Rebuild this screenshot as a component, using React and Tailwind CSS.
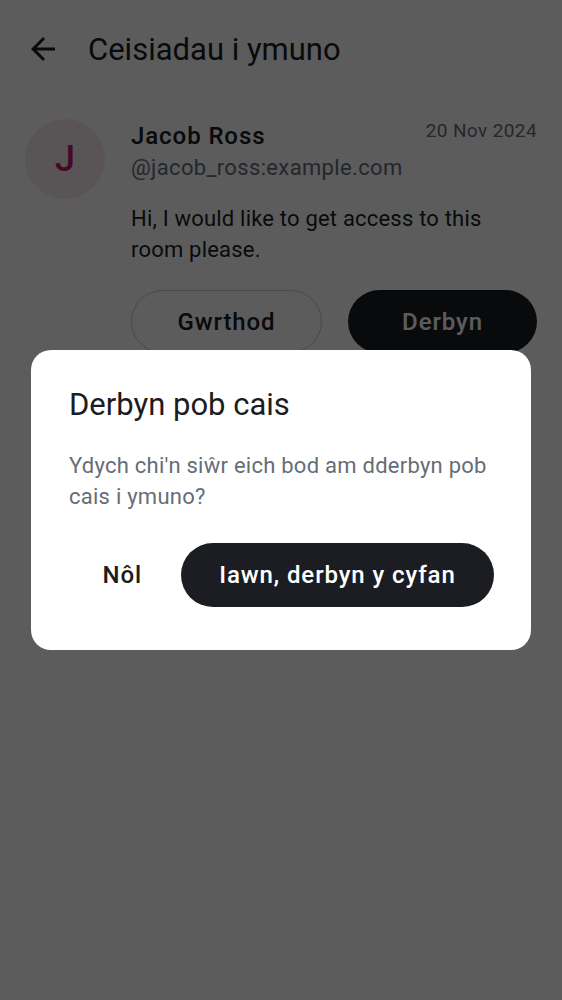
import React from "react";

const font = { fontFamily: "Roboto, 'Noto Sans', sans-serif" };
const medium = "font-['Roboto_Medium',Roboto,sans-serif] font-normal";

const BackArrow = () => (
  <svg width="36" height="36" viewBox="0 0 24 24" fill="#1b1d22">
    <path d="M20 11H7.83l5.59-5.59L12 4l-8 8 8 8 1.41-1.41L7.83 13H20v-2z" />
  </svg>
);

const JoinRequest = () => {
  return (
    <div className="flex pl-[25px] pr-[25px] pt-[21px]">
      <div className="w-[80px] h-[80px] shrink-0 rounded-full bg-[#f7e9ec] flex items-center justify-center">
        <span className={`text-[36px] ${medium} text-[#c01a6e] leading-none`}>J</span>
      </div>
      <div className="flex-1 ml-[26px]">
        <div className="flex items-start justify-between">
          <div className={`text-[24px] leading-[32px] ${medium} tracking-[0.9px] text-[#1b1d22] mt-[1px]`}>Jacob Ross</div>
          <div className="text-[19px] leading-[24px] text-[#656d77] tracking-[0.4px]">20 Nov 2024</div>
        </div>
        <div className="text-[22px] leading-[28px] text-[#656d77] tracking-[0.35px] mt-[2px]">@jacob_ross:example.com</div>
        <p className="text-[22px] leading-[31px] text-[#1b1d22] mt-[21px] tracking-[0.2px]">
          Hi, I would like to get access to this room please.
        </p>
        <div className="flex gap-[26px] mt-[25px]">
          <button className={`flex-1 h-[63px] rounded-full border border-[#c5c9cf] text-[24px] ${medium} tracking-[0.9px] text-[#1b1d22]`}>
            Gwrthod
          </button>
          <button className={`flex-1 h-[63px] rounded-full bg-[#1b1d22] text-[24px] ${medium} tracking-[0.9px] text-white`}>
            Derbyn
          </button>
        </div>
      </div>
    </div>
  );
};

export default function App() {
  return (
    <div className="min-h-screen bg-white relative" style={font}>
      <div className="h-[98px] flex items-center pl-[25px]">
        <BackArrow />
        <h1 className="ml-[27px] text-[31px] leading-[36px] text-[#1b1d22] mt-[1px]">Ceisiadau i ymuno</h1>
      </div>
      <JoinRequest />

      <div className="fixed inset-0 bg-black/[0.64] flex items-center justify-center px-[31px]">
        <div className="w-full bg-white rounded-[20px] pt-[37px] pb-[43px] pl-[38px] pr-[37px]">
          <h2 className="text-[31px] leading-[36px] text-[#1b1d22]">Derbyn pob cais</h2>
          <p className="mt-[27px] text-[22px] leading-[31px] text-[#656d77] tracking-[0.25px]">
            Ydych chi'n siŵr eich bod am dderbyn pob cais i ymuno?
          </p>
          <div className="flex justify-end items-center gap-[15px] mt-[31px]">
            <button className={`h-[64px] px-[24px] text-[24px] ${medium} tracking-[0.9px] text-[#1b1d22]`}>Nôl</button>
            <button className={`h-[64px] w-[313px] rounded-full bg-[#1b1d22] text-[24px] ${medium} tracking-[0.9px] text-white`}>
              Iawn, derbyn y cyfan
            </button>
          </div>
        </div>
      </div>
    </div>
  );
}
